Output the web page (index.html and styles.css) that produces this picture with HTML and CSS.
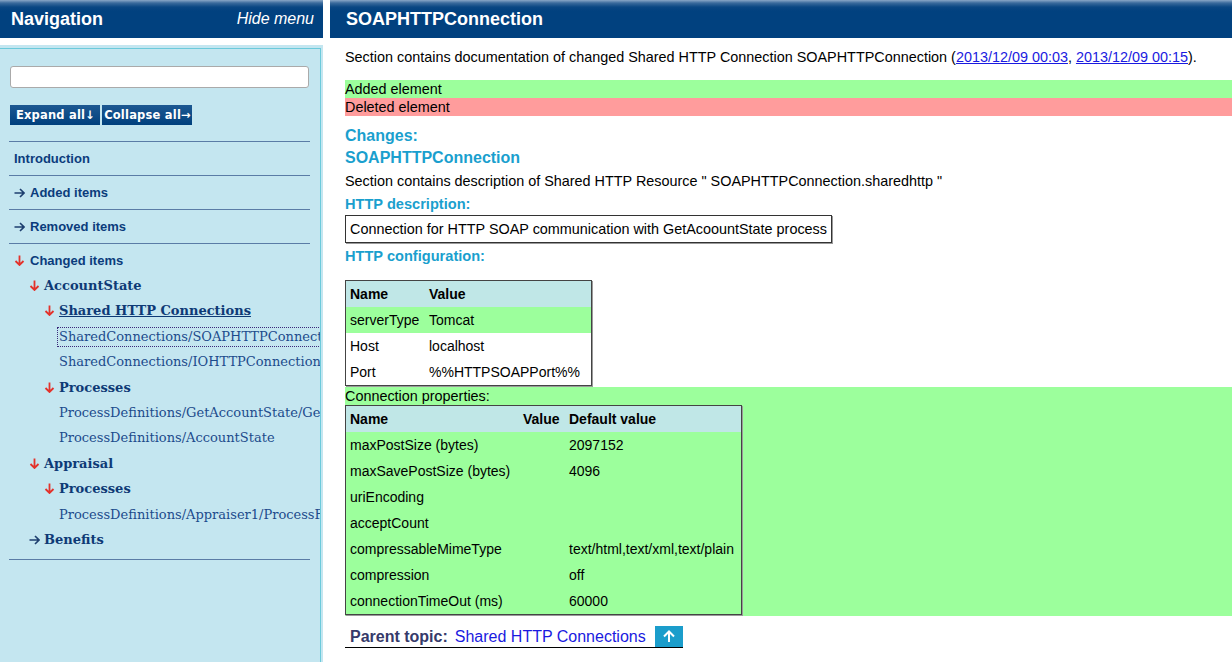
FILE: index.html
```html
<!DOCTYPE html>
<html>
<head>
<meta charset="utf-8">
<link rel="stylesheet" href="styles.css">
</head>
<body>
<div class="page">
  <aside class="nav">
    <div class="bar nav-head"><span class="nav-title">Navigation</span><span class="hide">Hide menu</span></div>
    <div class="nav-panel">
      <div class="nav-inner">
        <input class="search" type="text">
        <div class="btns"><button class="btn">Expand all↓</button><button class="btn">Collapse all→</button></div>
        <ul class="toc">
          <li class="toc-item">Introduction</li>
          <li class="toc-item"><span class="arr"><svg class="ic" width="11" height="10" viewBox="0 0 11 10"><path d="M0.5 5H10M6 1L10 5L6 9" fill="none" stroke="#1e3f6f" stroke-width="1.6"/></svg></span>Added items</li>
          <li class="toc-item"><span class="arr"><svg class="ic" width="11" height="10" viewBox="0 0 11 10"><path d="M0.5 5H10M6 1L10 5L6 9" fill="none" stroke="#1e3f6f" stroke-width="1.6"/></svg></span>Removed items</li>
          <li class="toc-item toc-last">
            <div><span class="arr"><svg class="ic" width="11" height="11" viewBox="0 0 11 11"><path d="M5.5 0.5V10M1.5 6L5.5 10L9.5 6" fill="none" stroke="#e3322b" stroke-width="1.8"/></svg></span>Changed items</div>
            <div class="tree">
              <div class="row b l1"><span class="tarr"><svg class="ic" width="11" height="11" viewBox="0 0 11 11"><path d="M5.5 0.5V10M1.5 6L5.5 10L9.5 6" fill="none" stroke="#e3322b" stroke-width="1.8"/></svg></span>AccountState</div>
              <div class="row b l2"><span class="tarr"><svg class="ic" width="11" height="11" viewBox="0 0 11 11"><path d="M5.5 0.5V10M1.5 6L5.5 10L9.5 6" fill="none" stroke="#e3322b" stroke-width="1.8"/></svg></span><span class="ul">Shared HTTP Connections</span></div>
              <div class="row l3"><span class="focus">SharedConnections/SOAPHTTPConnection</span></div>
              <div class="row l3">SharedConnections/IOHTTPConnection</div>
              <div class="row b l2"><span class="tarr"><svg class="ic" width="11" height="11" viewBox="0 0 11 11"><path d="M5.5 0.5V10M1.5 6L5.5 10L9.5 6" fill="none" stroke="#e3322b" stroke-width="1.8"/></svg></span>Processes</div>
              <div class="row l3">ProcessDefinitions/GetAccountState/GetAccountState</div>
              <div class="row l3">ProcessDefinitions/AccountState</div>
              <div class="row b l1"><span class="tarr"><svg class="ic" width="11" height="11" viewBox="0 0 11 11"><path d="M5.5 0.5V10M1.5 6L5.5 10L9.5 6" fill="none" stroke="#e3322b" stroke-width="1.8"/></svg></span>Appraisal</div>
              <div class="row b l2"><span class="tarr"><svg class="ic" width="11" height="11" viewBox="0 0 11 11"><path d="M5.5 0.5V10M1.5 6L5.5 10L9.5 6" fill="none" stroke="#e3322b" stroke-width="1.8"/></svg></span>Processes</div>
              <div class="row l3">ProcessDefinitions/Appraiser1/ProcessFlow</div>
              <div class="row b l1"><span class="tarr"><svg class="ic" width="11" height="10" viewBox="0 0 11 10"><path d="M0.5 5H10M6 1L10 5L6 9" fill="none" stroke="#1e3f6f" stroke-width="1.6"/></svg></span>Benefits</div>
            </div>
          </li>
        </ul>
      </div>
    </div>
  </aside>
  <main class="main">
    <div class="bar main-head"><h1 class="title">SOAPHTTPConnection</h1></div>
    <div class="content">
      <p class="intro">Section contains documentation of changed Shared HTTP Connection SOAPHTTPConnection (<a class="lnk" href="#">2013/12/09 00:03</a>, <a class="lnk" href="#">2013/12/09 00:15</a>).</p>
      <div class="band added">Added element</div>
      <div class="band deleted">Deleted element</div>
      <h2 class="h-changes">Changes:</h2>
      <h2 class="h-name">SOAPHTTPConnection</h2>
      <p class="desc">Section contains description of Shared HTTP Resource " SOAPHTTPConnection.sharedhttp "</p>
      <h3 class="h-sub h-desc">HTTP description:</h3>
      <div class="descbox">Connection for HTTP SOAP communication with GetAcoountState process</div>
      <h3 class="h-sub h-conf">HTTP configuration:</h3>
      <table class="tbl t1">
        <colgroup><col class="c79"><col class="c166"></colgroup>
        <tr class="th"><th>Name</th><th>Value</th></tr>
        <tr class="green"><td>serverType</td><td>Tomcat</td></tr>
        <tr class="white"><td>Host</td><td>localhost</td></tr>
        <tr class="white"><td>Port</td><td>%%HTTPSOAPPort%%</td></tr>
      </table>
      <div class="props">
        <div class="props-title">Connection properties:</div>
        <table class="tbl t2">
          <colgroup><col class="c173"><col class="c46"><col class="c176"></colgroup>
          <tr class="th"><th>Name</th><th>Value</th><th>Default value</th></tr>
          <tr><td>maxPostSize (bytes)</td><td></td><td>2097152</td></tr>
          <tr><td>maxSavePostSize (bytes)</td><td></td><td>4096</td></tr>
          <tr><td>uriEncoding</td><td></td><td></td></tr>
          <tr><td>acceptCount</td><td></td><td></td></tr>
          <tr><td>compressableMimeType</td><td></td><td>text/html,text/xml,text/plain</td></tr>
          <tr><td>compression</td><td></td><td>off</td></tr>
          <tr><td>connectionTimeOut (ms)</td><td></td><td>60000</td></tr>
        </table>
      </div>
      <div class="parent">
        <span class="parent-label">Parent topic:</span>
        <a class="parent-link" href="#">Shared HTTP Connections</a>
        <span class="upbtn"><svg width="28" height="21" viewBox="0 0 28 21"><path d="M14 16V5.5M9 10.5L14 5.5L19 10.5" fill="none" stroke="#fff" stroke-width="2"/></svg></span>
      </div>
    </div>
  </main>
</div>
</body>
</html>
```
FILE: styles.css
```css
* { box-sizing: border-box; }
html, body { margin: 0; padding: 0; }
body {
  font-family: "Liberation Sans", Arial, sans-serif;
  background: #fff;
  color: #000;
  width: 1232px;
  height: 662px;
  overflow: hidden;
}
.page { display: flex; height: 662px; }

.bar {
  height: 38px;
  flex-shrink: 0;
  background: linear-gradient(#8aa7c7 0, #3a6a9c 3px, #0a4783 7px, #01417f 11px, #01417f 100%);
  color: #fff;
  display: flex;
  align-items: center;
}

/* navigation */
.nav { width: 323px; flex-shrink: 0; display: flex; flex-direction: column; }
.nav-head { justify-content: space-between; padding: 0 9px 0 11px; margin-bottom: 7px; }
.nav-title { font-weight: bold; font-size: 18px; }
.hide { font-style: italic; font-size: 16px; }
.nav-panel { flex: 1; background: #c4e6f0; padding: 3px 2px 0 0; display: flex; min-height: 0; }
.nav-inner {
  flex: 1;
  border-top: 1px solid #6ccadb;
  border-right: 1px solid #6ccadb;
  overflow: hidden;
  padding: 17px 0 0 10px;
}
.search {
  display: block;
  width: 299px;
  height: 22px;
  border: 1px solid #aaa;
  border-radius: 3px;
  background: #fff;
  margin: 0;
  padding: 0;
}
.btns { display: flex; gap: 2px; margin-top: 17px; }
.btn {
  width: 90px;
  height: 20px;
  background: linear-gradient(#1d5892, #00407d);
  color: #fff;
  border: 0;
  margin: 0;
  padding: 0 0 0 1px;
  font-family: "DejaVu Sans", sans-serif;
  font-weight: bold;
  font-size: 11.5px;
  letter-spacing: 0.2px;
  text-align: center;
}
.toc {
  list-style: none;
  margin: 16px 0 0 -1px;
  padding: 0;
  width: 301px;
  border-top: 1px solid #5a7ca6;
}
.toc-item {
  padding: 8px 5px;
  height: 34px;
  line-height: 17px;
  border-bottom: 1px solid #5a7ca6;
  font-size: 13px;
  font-weight: bold;
  color: #0b3c7c;
  white-space: nowrap;
}
.toc-last { height: auto; padding-bottom: 7px; }
.arr { display: inline-block; width: 16px; }
.tarr { display: inline-block; width: 15px; }
.ic { display: inline-block; vertical-align: -1px; }
.tree { margin-top: 4px; font-family: "DejaVu Serif", serif; font-weight: normal; }
.row {
  height: 25.4px;
  line-height: 25.4px;
  font-size: 13px;
  color: #1c4b8c;
  white-space: nowrap;
}
.row.b { font-weight: bold; color: #0e3a76; }
.l1 { padding-left: 15px; }
.l2 { padding-left: 30px; }
.l3 { padding-left: 45px; }
.ul { text-decoration: underline; }
.focus {
  display: inline-block;
  line-height: 18px;
  vertical-align: middle;
  padding: 0 1px;
  margin-left: -1px;
  outline: 1px dotted #3a2a7a;
}

/* main */
.main { flex: 1; margin-left: 7px; display: flex; flex-direction: column; min-width: 0; }
.main-head { padding-left: 16px; }
.title { font-weight: bold; font-size: 18px; margin: 0; }
.content { padding-left: 15px; font-size: 14.4px; }
.intro { margin: 11px 0 0 0; line-height: 16px; }
.lnk { color: #1a1ae0; }
.band { line-height: 18px; }
.added { margin-top: 15px; background: #9cff9c; }
.deleted { background: #ff9c9c; }
.h-changes, .h-name {
  margin: 0;
  font-size: 16px;
  line-height: 22px;
  color: #1a9fce;
}
.h-changes { margin-top: 9px; }
.desc { margin: 0; line-height: 24px; }
.h-sub { margin: 0; font-size: 14.6px; color: #1a9fce; }
.h-desc { line-height: 22px; }
.h-conf { line-height: 26px; }
.descbox {
  display: inline-block;
  align-self: flex-start;
  border: 1px solid #333;
  box-shadow: 1px 1px 0 #999;
  padding: 5px 4px;
  line-height: 16px;
}
.tbl {
  border-collapse: separate;
  border-spacing: 0;
  border: 1px solid #444;
  box-shadow: 1px 1px 0 #9a9a9a;
  table-layout: fixed;
}
.tbl th, .tbl td {
  padding: 5px 4px;
  line-height: 16px;
  text-align: left;
  white-space: nowrap;
  font-size: 14px;
}
.t1 { width: 247px; margin-top: 11px; }
.t2 { width: 397px; }
.c79 { width: 79px; }
.c166 { width: 166px; }
.c173 { width: 173px; }
.c46 { width: 46px; }
.c176 { width: 176px; }
.th { background: #c0e7e7; }
.green { background: #9cff9c; }
.white { background: #fff; }
.props { margin-top: 1px; background: #9cff9c; padding-bottom: 1px; }
.props-title { line-height: 18px; }
.parent {
  display: inline-flex;
  align-items: center;
  margin-top: 10px;
  height: 22px;
  padding-left: 5px;
  border-bottom: 1px solid #000;
  font-size: 16px;
}
.parent-label { font-weight: bold; color: #363a6a; }
.parent-link { color: #1a1ae0; text-decoration: none; margin-left: 7px; }
.upbtn {
  display: block;
  width: 28px;
  height: 21px;
  margin-left: 9px;
  background: #1b9dcb;
}
.upbtn svg { display: block; }
```
